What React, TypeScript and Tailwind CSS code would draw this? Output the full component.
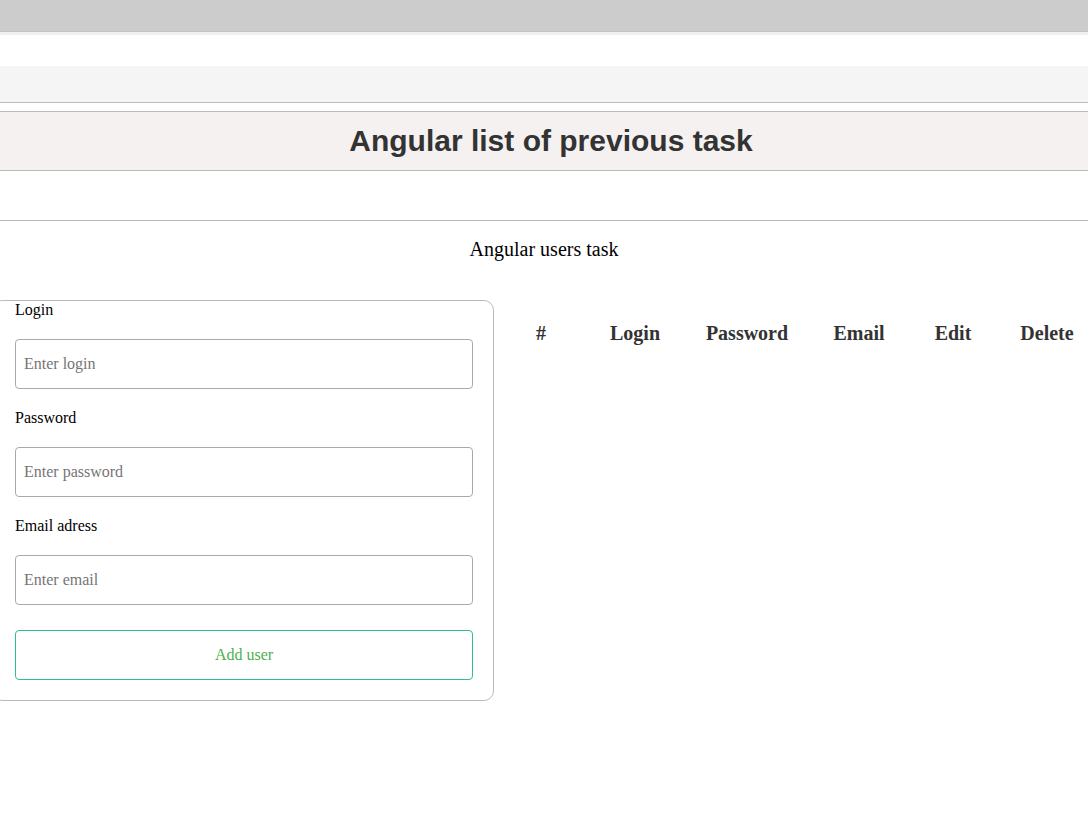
const serif = "font-['Liberation_Serif','Times_New_Roman',serif]";

function Field({ label, placeholder, first }: { label: string; placeholder: string; first?: boolean }) {
  return (
    <div className={first ? "" : "mt-[20px]"}>
      <label className="block text-[16px] leading-[18px] text-black">{label}</label>
      <input
        placeholder={placeholder}
        className="mt-[20px] block h-[50px] w-full rounded-[4px] border border-[#aaaaaa] px-[8px] text-[16px] text-black outline-none placeholder:text-[#757575]"
      />
    </div>
  );
}

export default function App() {
  const cols = [
    { name: "#", w: "w-[94px]" },
    { name: "Login", w: "w-[94px]" },
    { name: "Password", w: "w-[130px]" },
    { name: "Email", w: "w-[94px]" },
    { name: "Edit", w: "w-[94px]" },
    { name: "Delete", w: "w-[94px]" },
  ];

  return (
    <div className={`min-h-[816px] w-[1088px] overflow-hidden bg-white ${serif}`}>
      {/* browser-ish top bars */}
      <div className="h-[32px] border-b border-[#c4c4c4] bg-[#cccccc]" />
      <div className="h-[3px] bg-[#f0f0f0]" />
      <div className="h-[31px] bg-white" />
      <div className="h-[37px] border-b border-[#bbbbbb] bg-[#f5f5f5]" />
      <div className="h-[8px]" />

      {/* title band */}
      <div className="flex h-[60px] items-center justify-center border-y border-[#bbbbbb] bg-[#f5f1f1]">
        <h1 className="pl-[14px] font-['Liberation_Sans',Arial,sans-serif] text-[30px] font-bold leading-none text-[#333333]">
          Angular list of previous task
        </h1>
      </div>

      <div className="h-[50px] border-b border-[#bbbbbb]" />

      <p className="pt-[17px] text-center text-[20px] leading-[23px] text-black">Angular users task</p>

      <div className="mt-[39px] flex items-start">
        {/* form panel */}
        <form
          className="-ml-[8px] w-[502px] shrink-0 rounded-[10px] border border-[#bbbbbb] pl-[22px] pr-[20px] pb-[20px]"
          onSubmit={(e) => e.preventDefault()}
        >
          <Field label="Login" placeholder="Enter login" first />
          <Field label="Password" placeholder="Enter password" />
          <Field label="Email adress" placeholder="Enter email" />
          <button
            type="submit"
            className="mt-[25px] block h-[50px] w-full rounded-[4px] border border-[#2fbf8a] text-[16px] text-[#4caf50]"
          >
            Add user
          </button>
        </form>

        {/* users table */}
        <table className="shrink-0 border-collapse">
          <thead>
            <tr className="h-[66px]">
              {cols.map((c) => (
                <th key={c.name} className={`${c.w} text-center text-[20px] font-bold leading-[23px] text-[#333333]`}>
                  {c.name}
                </th>
              ))}
            </tr>
          </thead>
          <tbody />
        </table>
      </div>
    </div>
  );
}
